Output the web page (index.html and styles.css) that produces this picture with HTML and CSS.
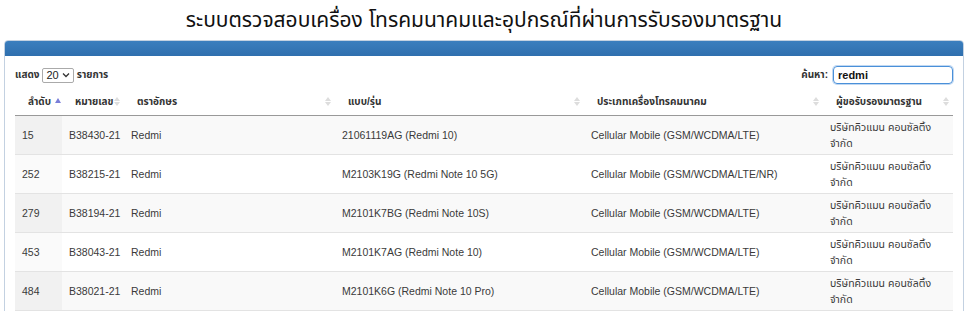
FILE: index.html
```html
<!DOCTYPE html>
<html lang="th">
<head>
<meta charset="utf-8">
<title>ระบบตรวจสอบเครื่องโทรคมนาคม</title>
<link rel="stylesheet" href="styles.css">
</head>
<body>
<h1 class="title">ระบบตรวจสอบเครื่อง โทรคมนาคมและอุปกรณ์ที่ผ่านการรับรองมาตรฐาน</h1>
<div class="panel">
  <div class="panel-heading"></div>
  <div class="panel-body">
    <div class="controls">
      <label class="length">แสดง <span class="select">20 <svg width="8" height="6" viewBox="0 0 8 6"><path d="M1 1.5 L4 4.5 L7 1.5" fill="none" stroke="#333" stroke-width="1.3"/></svg></span> รายการ</label>
      <label class="search">ค้นหา: <span class="input">redmi</span></label>
    </div>
    <table class="grid">
      <colgroup>
        <col class="c1"><col class="c2"><col class="c3"><col class="c4"><col class="c5"><col class="c6">
      </colgroup>
      <thead>
        <tr>
          <th><span class="th-text">ลำดับ</span><span class="sort-active"></span></th>
          <th><span class="th-text">หมายเลข</span><span class="sort"></span></th>
          <th><span class="th-text">ตราอักษร</span><span class="sort"></span></th>
          <th><span class="th-text">แบบ/รุ่น</span><span class="sort"></span></th>
          <th><span class="th-text">ประเภทเครื่องโทรคมนาคม</span><span class="sort"></span></th>
          <th><span class="th-text">ผู้ขอรับรองมาตรฐาน</span><span class="sort"></span></th>
        </tr>
      </thead>
      <tbody>
        <tr class="odd"><td class="sorted">15</td><td>B38430-21</td><td>Redmi</td><td>21061119AG (Redmi 10)</td><td>Cellular Mobile (GSM/WCDMA/LTE)</td><td class="wrap">บริษัทคิวแมน คอนซัลติ้ง<br>จำกัด</td></tr>
        <tr class="even"><td class="sorted">252</td><td>B38215-21</td><td>Redmi</td><td>M2103K19G (Redmi Note 10 5G)</td><td>Cellular Mobile (GSM/WCDMA/LTE/NR)</td><td class="wrap">บริษัทคิวแมน คอนซัลติ้ง<br>จำกัด</td></tr>
        <tr class="odd"><td class="sorted">279</td><td>B38194-21</td><td>Redmi</td><td>M2101K7BG (Redmi Note 10S)</td><td>Cellular Mobile (GSM/WCDMA/LTE)</td><td class="wrap">บริษัทคิวแมน คอนซัลติ้ง<br>จำกัด</td></tr>
        <tr class="even"><td class="sorted">453</td><td>B38043-21</td><td>Redmi</td><td>M2101K7AG (Redmi Note 10)</td><td>Cellular Mobile (GSM/WCDMA/LTE)</td><td class="wrap">บริษัทคิวแมน คอนซัลติ้ง<br>จำกัด</td></tr>
        <tr class="odd"><td class="sorted">484</td><td>B38021-21</td><td>Redmi</td><td>M2101K6G (Redmi Note 10 Pro)</td><td>Cellular Mobile (GSM/WCDMA/LTE)</td><td class="wrap">บริษัทคิวแมน คอนซัลติ้ง<br>จำกัด</td></tr>
      </tbody>
    </table>
  </div>
</div>
</body>
</html>
```
FILE: styles.css
```css
* { box-sizing: border-box; }
html, body { background: #fff; }
body {
  margin: 0;
  padding: 0 4px;
  font-family: "Liberation Sans", "Noto Sans Thai", "Noto Sans", sans-serif;
  color: #333;
}
.title {
  margin: 0;
  height: 40px;
  padding-top: 6px;
  text-align: center;
  font-size: 21px;
  font-weight: normal;
  line-height: 28px;
  color: #111;
}
.panel {
  border: 1px solid #c3d1e1;
  border-radius: 4px 4px 0 0;
  background: #fff;
  height: 280px;
  overflow: hidden;
}
.panel-heading {
  height: 16px;
  background: linear-gradient(#3b7fbf, #2f6fae);
  margin: -1px -1px 0;
  border-radius: 4px 4px 0 0;
}
.panel-body {
  padding: 10px 10px 0;
}
.controls {
  display: flex;
  justify-content: space-between;
  align-items: center;
  height: 18px;
  font-size: 10px;
  font-weight: bold;
  color: #333;
}
.length { display: flex; align-items: center; gap: 3px; }
.select {
  display: inline-flex;
  align-items: center;
  gap: 3px;
  height: 15px;
  padding: 0 3px;
  border: 1px solid #aaa;
  border-radius: 2px;
  font-family: "Liberation Sans", sans-serif;
  font-weight: normal;
  font-size: 11px;
  color: #222;
}
.search { display: flex; align-items: center; gap: 5px; }
.input {
  display: inline-block;
  width: 120px;
  height: 18px;
  padding: 1px 4px;
  border: 1px solid #4a90d9;
  border-radius: 4px;
  box-shadow: 0 0 0 1px rgba(74,144,217,0.35);
  font-family: "Liberation Sans", sans-serif;
  font-size: 11px;
  font-weight: bold;
  line-height: 14px;
  color: #111;
}
.grid {
  margin-top: 5px;
  width: 938px;
  table-layout: fixed;
  border-collapse: collapse;
  font-size: 10px;
}
.c1 { width: 47px; }
.c2 { width: 62px; }
.c3 { width: 211px; }
.c4 { width: 249px; }
.c5 { width: 239px; }
.c6 { width: 130px; }
th {
  height: 26px;
  padding: 0 6px 0 13px;
  text-align: left;
  font-weight: bold;
  font-size: 10px;
  color: #333;
  border-bottom: 1px solid #999;
  white-space: nowrap;
  position: relative;
}
.sort {
  position: absolute;
  right: 4px;
  top: 8px;
  width: 6px;
  height: 10px;
}
.sort::before, .sort::after {
  content: "";
  position: absolute;
  left: 0;
  border-left: 3px solid transparent;
  border-right: 3px solid transparent;
}
.sort::before { top: 0; border-bottom: 4px solid #ddd; }
.sort::after { top: 5px; border-top: 4px solid #ddd; }
.sort-active {
  display: inline-block;
  margin-left: 4px;
  vertical-align: 2px;
  border-left: 3px solid transparent;
  border-right: 3px solid transparent;
  border-bottom: 5px solid #7a7ed8;
}
td {
  height: 39px;
  padding: 3px 7px;
  font-size: 10.5px;
  line-height: 16px;
  color: #3a3a3a;
  border-bottom: 1px solid #e3e3e3;
  vertical-align: middle;
  white-space: nowrap;
  overflow: hidden;
}
td.wrap { white-space: normal; }
tr.odd td { background: #f9f9f9; }
tr.odd td.sorted { background: #f1f1f1; }
tr.even td { background: #fff; }
tr.even td.sorted { background: #fafafa; }
```
